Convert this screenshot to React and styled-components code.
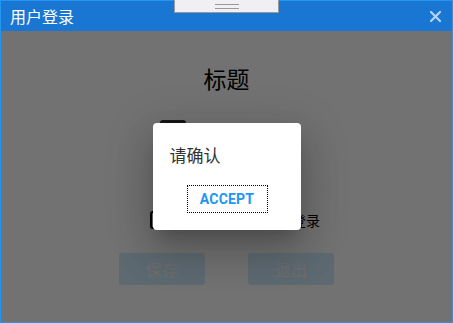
import React from 'react';
import styled, { createGlobalStyle } from 'styled-components';

const GlobalStyle = createGlobalStyle`
  html, body {
    margin: 0;
    padding: 0;
    width: 453px;
    height: 323px;
    overflow: hidden;
    background: #ffffff;
    font-family: "Noto Sans CJK SC", "Noto Sans", sans-serif;
  }
`;

const App = () => (
  <>
    <GlobalStyle />
    <Window>
      <DragHandle>
        <Grip />
      </DragHandle>
      <TitleBar>
        <WindowTitle>用户登录</WindowTitle>
        <CloseButton aria-label="close">
          <svg width="11" height="11" viewBox="0 0 11 11">
            <path d="M1 1 L10 10 M10 1 L1 10" stroke="currentColor" strokeWidth="2.2" strokeLinecap="square" />
          </svg>
        </CloseButton>
      </TitleBar>
      <Body>
        <Heading>标题</Heading>
        <FieldRow>
          <DarkBox />
          <Hint>请输入用户名</Hint>
        </FieldRow>
        <CheckRow>
          <CheckBox />
          <CheckLabel>记住密码下次自动登录</CheckLabel>
        </CheckRow>
        <ButtonRow>
          <ActionButton>保存</ActionButton>
          <ActionButton>退出</ActionButton>
        </ButtonRow>
        <Overlay>
          <Dialog>
            <DialogText>请确认</DialogText>
            <DialogActions>
              <AcceptButton>ACCEPT</AcceptButton>
            </DialogActions>
          </Dialog>
        </Overlay>
      </Body>
    </Window>
  </>
);
export default App;

const Window = styled.div`
  position: relative;
  box-sizing: border-box;
  width: 453px;
  height: 323px;
  border: 1px solid #2196f3;
  display: flex;
  flex-direction: column;
  background: #ffffff;
`;

const DragHandle = styled.div`
  position: absolute;
  top: -1px;
  left: 173px;
  box-sizing: border-box;
  width: 105px;
  height: 13px;
  background: #efeff4;
  border: 1px solid #999999;
  border-top: none;
  display: flex;
  align-items: center;
  justify-content: center;
  z-index: 5;
`;

const Grip = styled.div`
  width: 24px;
  height: 3px;
  border-top: 1px solid #999999;
  border-bottom: 1px solid #999999;
`;

const TitleBar = styled.div`
  height: 30px;
  flex: none;
  background: #1976d2;
  display: flex;
  align-items: center;
  justify-content: space-between;
  padding: 0 9px 0 9px;
`;

const WindowTitle = styled.span`
  color: #ffffff;
  font-size: 16px;
  line-height: 30px;
`;

const CloseButton = styled.button`
  border: none;
  background: none;
  padding: 0;
  color: #b3d4f5;
  display: flex;
  align-items: center;
  margin-right: 2px;
`;

const Body = styled.div`
  position: relative;
  flex: 1;
  display: flex;
  flex-direction: column;
  align-items: center;
  background: #ffffff;
`;

const Heading = styled.h1`
  margin: 31px 0 0;
  font-size: 23px;
  font-weight: 400;
  line-height: 32px;
  color: #000000;
`;

const FieldRow = styled.div`
  display: flex;
  align-items: center;
  gap: 11px;
  margin-top: 26px;
  margin-left: -5px;
`;

const DarkBox = styled.div`
  width: 26px;
  height: 26px;
  border-radius: 3px;
  background: #333333;
`;

const Hint = styled.span`
  font-size: 15px;
  color: #cccccc;
`;

const CheckRow = styled.div`
  display: flex;
  align-items: center;
  gap: 12px;
  margin-top: 64px;
  margin-left: 17px;
`;

const CheckBox = styled.div`
  width: 18px;
  height: 18px;
  box-sizing: border-box;
  border: 2px solid #000000;
  border-radius: 3px;
`;

const CheckLabel = styled.span`
  font-size: 14px;
  color: #000000;
  white-space: nowrap;
`;

const ButtonRow = styled.div`
  display: flex;
  gap: 43px;
  margin-top: 23px;
`;

const ActionButton = styled.button`
  width: 86px;
  height: 32px;
  border: none;
  border-radius: 3px;
  background: #d3eeff;
  color: #f4f4f4;
  font-family: "Noto Sans CJK SC", sans-serif;
  font-size: 16px;
`;

const Overlay = styled.div`
  position: absolute;
  inset: 0;
  background: rgba(0, 0, 0, 0.553);
  display: flex;
  align-items: center;
  justify-content: center;
  z-index: 2;
`;

const Dialog = styled.div`
  width: 148px;
  height: 107px;
  box-sizing: border-box;
  background: #ffffff;
  border-radius: 4px;
  box-shadow: 0 11px 15px -7px rgba(0, 0, 0, 0.2), 0 24px 38px 3px rgba(0, 0, 0, 0.14), 0 9px 46px 8px rgba(0, 0, 0, 0.12);
  padding: 20px 0 0 17px;
  display: flex;
  flex-direction: column;
`;

const DialogText = styled.div`
  font-size: 17px;
  line-height: 24px;
  color: #333333;
`;

const DialogActions = styled.div`
  display: flex;
  margin-top: 18px;
  padding-left: 17px;
`;

const AcceptButton = styled.button`
  box-sizing: border-box;
  width: 81px;
  height: 28px;
  border: 1px dotted #000000;
  background: #ffffff;
  color: #2196f3;
  font-family: Roboto, "Liberation Sans", sans-serif;
  font-weight: 700;
  font-size: 14px;
  letter-spacing: 0.2px;
  padding: 0;
`;
